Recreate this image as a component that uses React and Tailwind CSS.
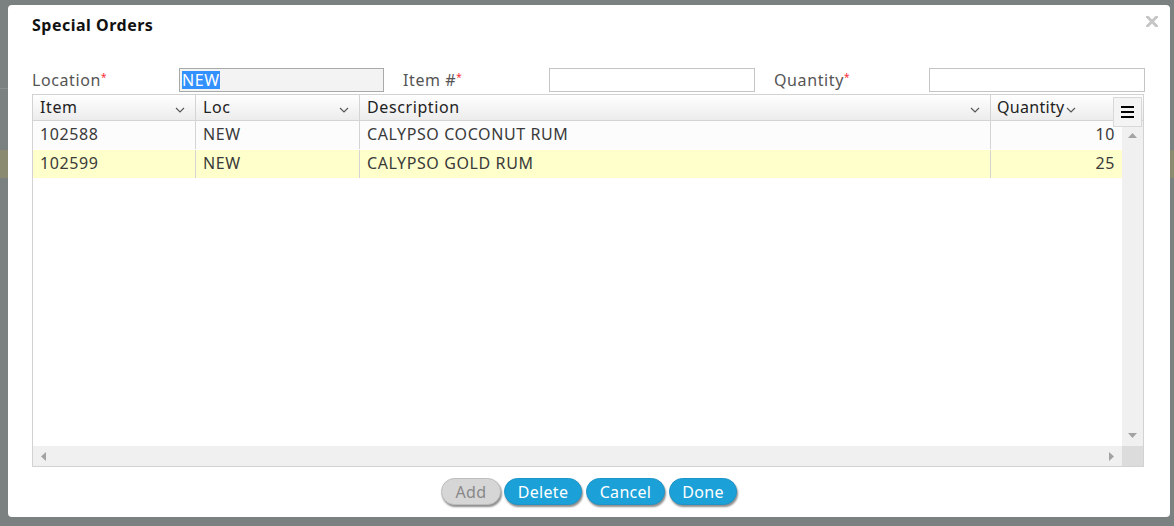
import React from "react";

const Chev = ({ className = "" }) => (
  <svg width="10" height="6" viewBox="0 0 10 6" className={className}>
    <path d="M1 1 L5 5 L9 1" fill="none" stroke="#555" strokeWidth="1.1" />
  </svg>
);

const cols = [
  { key: "item", label: "Item", w: "w-[163px]" },
  { key: "loc", label: "Loc", w: "w-[164px]" },
  { key: "desc", label: "Description", w: "w-[631px]" },
];

const rows = [
  { item: "102588", loc: "NEW", desc: "CALYPSO COCONUT RUM", qty: "10", bg: "bg-[#fcfcfc]" },
  { item: "102599", loc: "NEW", desc: "CALYPSO GOLD RUM", qty: "25", bg: "bg-[#ffffcc]" },
];

export default function App() {
  return (
    <div
      className="relative h-[526px] w-[1174px] overflow-hidden bg-[#7b8181] pt-[5px] pl-[8px] tracking-[0.6px]"
      style={{ fontFamily: '"Noto Sans", "Open Sans", sans-serif' }}
    >
      {/* faint background content behind overlay */}
      <div className="absolute left-0 top-[88px] h-px w-[8px] bg-[#8a8f8f]" />
      <div className="absolute left-0 top-[150px] h-[28px] w-[8px] bg-[#8a8a70]" />
      <div className="absolute right-0 top-[150px] h-[28px] w-[4px] bg-[#8a8a70]" />

      <div className="relative flex h-[512px] w-[1162px] flex-col rounded-[4px] bg-white">
        {/* title */}
        <div className="flex h-[40px] items-start pl-[24px] pt-[9px]">
          <h1 className="text-[16px] font-bold leading-[22px] tracking-[0.5px] text-[#111]">Special Orders</h1>
        </div>
        <button className="absolute right-[12px] top-[11px]" aria-label="Close">
          <svg width="12" height="11" viewBox="0 0 12 11">
            <path d="M1.5 1 L10.5 10 M10.5 1 L1.5 10" stroke="#c6c6c6" strokeWidth="3" strokeLinecap="square" />
          </svg>
        </button>

        {/* form row */}
        <div className="mt-[23px] flex h-[24px] items-center pl-[24px] text-[16px] text-[#555]">
          <label className="w-[147px]">
            Location<span className="relative top-[-5px] text-[10px] text-red-500">*</span>
          </label>
          <div className="flex h-[24px] w-[205px] items-center border border-[#a9a9a9] bg-[#f3f3f3] px-[2px]">
            <span className="bg-[#3390ff] leading-[18px] text-white">NEW</span>
          </div>
          <label className="ml-[19px] w-[146px]">
            Item #<span className="relative top-[-5px] text-[10px] text-red-500">*</span>
          </label>
          <div className="h-[24px] w-[206px] border border-[#c4c4c4] bg-white" />
          <label className="ml-[19px] w-[155px]">
            Quantity<span className="relative top-[-5px] text-[10px] text-red-500">*</span>
          </label>
          <div className="h-[24px] w-[216px] border border-[#c4c4c4] bg-white" />
        </div>

        {/* grid */}
        <div className="relative ml-[24px] mt-[2px] flex h-[373px] w-[1112px] flex-col border border-[#d2d2d2]">
          {/* header */}
          <div className="flex h-[26px] border-b border-[#d4d4d4] bg-gradient-to-b from-white to-[#ececec] text-[16px] leading-[22px] text-[#222]">
            {cols.map((c) => (
              <div key={c.key} className={`${c.w} flex items-center justify-between border-r border-[#d4d4d4] pl-[7px] pr-[10px]`}>
                <span className="-mt-[2px]">{c.label}</span>
                <Chev className="mt-[4px]" />
              </div>
            ))}
            <div className="flex w-[122px] items-center pl-[6px] tracking-[0.3px]">
              <span className="-mt-[2px]">Quantity</span>
              <Chev className="ml-[1px] mt-[4px]" />
            </div>
          </div>
          {/* menu button */}
          <div className="absolute right-[1px] top-[2px] z-10 flex h-[30px] w-[29px] items-center justify-center border border-[#d8d8d8] bg-[#f4f4f4]">
            <div className="flex flex-col gap-[3px]">
              <div className="h-[2px] w-[13px] bg-black" />
              <div className="h-[2px] w-[13px] bg-black" />
              <div className="h-[2px] w-[13px] bg-black" />
            </div>
          </div>

          {/* body */}
          <div className="flex flex-1">
            <div className="flex flex-1 flex-col">
              {rows.map((r, i) => (
                <div key={i} className={`flex h-[28px] text-[16px] leading-[22px] text-[#3a3a3a] ${r.bg} ${i === 0 ? "mb-[1px]" : ""}`}>
                  <div className="flex w-[163px] items-center border-r border-[#d4d4d4] pb-[3px] pl-[7px]">{r.item}</div>
                  <div className="flex w-[164px] items-center border-r border-[#d4d4d4] pb-[3px] pl-[7px]">{r.loc}</div>
                  <div className="flex w-[631px] items-center border-r border-[#d4d4d4] pb-[3px] pl-[7px]">{r.desc}</div>
                  <div className="flex flex-1 items-center justify-end pb-[3px] pr-[7px]">{r.qty}</div>
                </div>
              ))}
            </div>
            <div className="flex w-[21px] flex-col items-center justify-between bg-[#f0f0f0] pt-[12px] pb-[8px]">
              <svg width="9" height="5" viewBox="0 0 9 5"><path d="M0 5 L4.5 0 L9 5 Z" fill="#a3a3a3" /></svg>
              <svg width="9" height="5" viewBox="0 0 9 5"><path d="M0 0 L4.5 5 L9 0 Z" fill="#a3a3a3" /></svg>
            </div>
          </div>
          {/* horizontal scrollbar */}
          <div className="flex h-[20px]">
            <div className="flex flex-1 items-center justify-between bg-[#f0f0f0] px-[8px]">
              <svg width="5" height="9" viewBox="0 0 5 9"><path d="M5 0 L0 4.5 L5 9 Z" fill="#a3a3a3" /></svg>
              <svg width="5" height="9" viewBox="0 0 5 9"><path d="M0 0 L5 4.5 L0 9 Z" fill="#a3a3a3" /></svg>
            </div>
            <div className="w-[21px] bg-[#dcdcdc]" />
          </div>
        </div>

        {/* buttons */}
        <div className="mt-[11px] flex justify-center gap-[3px] tracking-[0.3px]">
          <button className="h-[27px] w-[60px] rounded-full border border-[#bdbdbd] bg-[#d6d6d6] text-[16px] text-[#888] shadow-[1px_2px_2px_rgba(0,0,0,0.45)]">
            Add
          </button>
          <button className="h-[27px] w-[78px] rounded-full border border-[#1b95c9] bg-[#1ba1d8] text-[16px] text-white shadow-[1px_2px_2px_rgba(0,0,0,0.45)]">
            Delete
          </button>
          <button className="ml-[1px] h-[27px] w-[79px] rounded-full border border-[#1b95c9] bg-[#1ba1d8] text-[16px] text-white shadow-[1px_2px_2px_rgba(0,0,0,0.45)]">
            Cancel
          </button>
          <button className="ml-[1px] h-[27px] w-[68px] rounded-full border border-[#1b95c9] bg-[#1ba1d8] text-[16px] text-white shadow-[1px_2px_2px_rgba(0,0,0,0.45)]">
            Done
          </button>
        </div>
      </div>
    </div>
  );
}
